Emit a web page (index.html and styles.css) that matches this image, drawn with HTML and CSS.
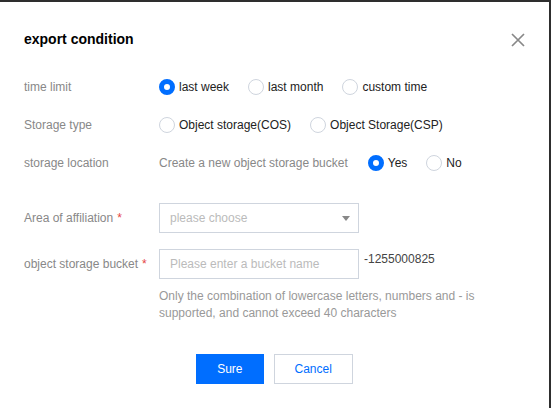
FILE: index.html
```html
<!DOCTYPE html>
<html lang="en">
<head>
<meta charset="utf-8">
<title>export condition</title>
<link rel="stylesheet" href="styles.css">
</head>
<body>
<div class="dialog">
  <div class="dialog-header">
    <h3 class="dialog-title">export condition</h3>
    <button class="dialog-close" type="button" aria-label="close">
      <svg width="14" height="14" viewBox="0 0 14 14"><path d="M1 1L13 13M13 1L1 13" stroke="#888" stroke-width="1.7" fill="none"/></svg>
    </button>
  </div>

  <div class="form">
    <div class="form-row">
      <div class="form-label">time limit</div>
      <div class="form-control">
        <label class="radio"><span class="radio-dot checked"></span>last week</label>
        <label class="radio"><span class="radio-dot"></span>last month</label>
        <label class="radio"><span class="radio-dot"></span>custom time</label>
      </div>
    </div>
    <div class="form-row">
      <div class="form-label">Storage type</div>
      <div class="form-control">
        <label class="radio"><span class="radio-dot"></span>Object storage(COS)</label>
        <label class="radio"><span class="radio-dot"></span>Object Storage(CSP)</label>
      </div>
    </div>
    <div class="form-row">
      <div class="form-label">storage location</div>
      <div class="form-control">
        <span class="hint">Create a new object storage bucket</span>
        <label class="radio"><span class="radio-dot checked"></span>Yes</label>
        <label class="radio"><span class="radio-dot"></span>No</label>
      </div>
    </div>

    <div class="form-row field-row area-row">
      <div class="form-label">Area of affiliation<span class="required">*</span></div>
      <div class="form-control">
        <div class="select">
          <span class="placeholder">please choose</span>
          <span class="caret"></span>
        </div>
      </div>
    </div>

    <div class="form-row field-row bucket-row">
      <div class="form-label">object storage bucket<span class="required">*</span></div>
      <div class="form-control top">
        <input class="text-input" type="text" placeholder="Please enter a bucket name">
        <span class="suffix">-1255000825</span>
      </div>
    </div>
    <div class="form-row help-row">
      <div></div>
      <p class="help">Only the combination of lowercase letters, numbers and - is supported, and cannot exceed 40 characters</p>
    </div>
  </div>

  <div class="dialog-footer">
    <button class="btn btn-primary" type="button">Sure</button>
    <button class="btn btn-default" type="button">Cancel</button>
  </div>
</div>
</body>
</html>
```

FILE: styles.css
```css
* {
  box-sizing: border-box;
}

html, body {
  margin: 0;
  padding: 0;
  background: #ffffff;
}

body {
  font-family: "Liberation Sans", Arial, sans-serif;
  font-size: 12px;
  color: #222;
}

.dialog {
  width: 551px;
  height: 408px;
  background: #fff;
  border-top: 2px solid #2e2e2e;
  border-right: 2px solid #2e2e2e;
  padding: 27px 24px 0 24px;
}

.dialog-header {
  display: flex;
  align-items: center;
  justify-content: space-between;
  height: 20px;
}

.dialog-title {
  margin: 0;
  font-size: 14px;
  font-weight: bold;
  line-height: 20px;
  color: #000;
}

.dialog-close {
  border: 0;
  background: none;
  padding: 0;
  width: 14px;
  height: 14px;
  margin-top: 2px;
  display: flex;
}

.form {
  margin-top: 29px;
}

/* each row is a label column plus a control column */
.form-row {
  display: grid;
  grid-template-columns: 135px 1fr;
  align-items: center;
  height: 18px;
  margin-bottom: 20px;
}

.form-label {
  color: #888;
  line-height: 18px;
  white-space: nowrap;
}

.required {
  color: #e54545;
  margin-left: 4px;
}

.form-control {
  display: flex;
  align-items: center;
  line-height: 18px;
}

.form-control.top {
  align-items: flex-start;
}

.radio {
  display: inline-flex;
  align-items: center;
  margin-right: 19px;
  color: #222;
  white-space: nowrap;
}

.radio-dot {
  width: 16px;
  height: 16px;
  border-radius: 50%;
  border: 1px solid #cfd5de;
  background: #fff;
  margin-right: 4px;
  flex: none;
}

.radio-dot.checked {
  border: 5px solid #006eff;
}

.hint {
  color: #888;
  margin-right: 20px;
}

.field-row {
  height: 30px;
}

.area-row {
  margin-top: 31px;
  margin-bottom: 16px;
}

.bucket-row {
  margin-bottom: 9px;
}

.select {
  width: 200px;
  height: 30px;
  border: 1px solid #cfd5de;
  display: flex;
  align-items: center;
  justify-content: space-between;
  padding: 0 8px 0 10px;
}

.placeholder {
  color: #bbb;
}

.caret {
  width: 0;
  height: 0;
  border-left: 4px solid transparent;
  border-right: 4px solid transparent;
  border-top: 5px solid #888;
}

.text-input {
  width: 200px;
  height: 30px;
  border: 1px solid #cfd5de;
  padding: 0 10px;
  font-family: inherit;
  font-size: 12px;
  color: #000;
  outline: none;
  border-radius: 0;
}

.text-input::placeholder {
  color: #bbb;
}

.suffix {
  margin-left: 5px;
  line-height: 20px;
  color: #444;
}

.help-row {
  height: auto;
  align-items: start;
  margin-bottom: 0;
}

.help {
  margin: 0;
  width: 320px;
  color: #999;
  line-height: 17px;
}

.dialog-footer {
  display: flex;
  justify-content: center;
  gap: 10px;
  margin-top: 32px;
}

.btn {
  height: 30px;
  padding: 0 20px;
  font-family: inherit;
  font-size: 12px;
  border: 1px solid #cfd5de;
  border-radius: 0;
  background: #fff;
  cursor: pointer;
}

.btn-primary {
  background: #006eff;
  border-color: #006eff;
  color: #fff;
}

.btn-default {
  color: #006eff;
}
```
